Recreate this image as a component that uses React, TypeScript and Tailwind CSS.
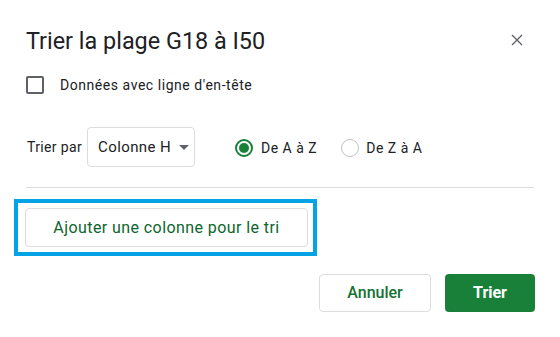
import React from 'react';

export default function App() {
  return (
    <div className="w-[560px] h-[337px] bg-white text-[#202124] font-['Roboto',_'Liberation_Sans',_sans-serif] overflow-hidden">
      {/* Header */}
      <div className="flex items-start justify-between pl-[26px] pr-[36px] pt-[25px]">
        <h1 className="text-[23.4px] leading-8 font-normal text-[#202124]">Trier la plage G18 à I50</h1>
        <button className="mt-[8px] w-[14px] h-[14px] flex items-center justify-center text-[#5f6368]">
          <svg width="12" height="12" viewBox="0 0 12 12" fill="none" stroke="currentColor" strokeWidth="1.4">
            <path d="M1 1L11 11M11 1L1 11" />
          </svg>
        </button>
      </div>

      {/* Header row checkbox */}
      <label className="flex items-center gap-[16px] pl-[26px] mt-[18px]">
        <span className="w-[18px] h-[18px] border-2 border-[#5f6368] rounded-[2px]" />
        <span className="text-[14px] leading-5 tracking-[0.55px]">Données avec ligne d'en-tête</span>
      </label>

      {/* Sort by row */}
      <div className="flex items-center pl-[27px] mt-[32px] h-[40px] whitespace-nowrap">
        <span className="text-[14px] mr-[5px] tracking-[0.35px]">Trier par</span>
        <div className="shrink-0 h-[40px] w-[108px] border border-[#dadce0] rounded-[4px] flex items-center pl-[10px] pr-[6px]">
          <span className="text-[15px] tracking-[0.4px]">Colonne H</span>
          <svg className="ml-[8px] shrink-0" width="10" height="5" viewBox="0 0 10 5">
            <path d="M0 0L5 5L10 0Z" fill="#5f6368" />
          </svg>
        </div>
        <div className="flex items-center ml-[40px] mt-[2px]">
          <span className="w-[18px] h-[18px] rounded-full border-2 border-[#188038] flex items-center justify-center">
            <span className="w-[10px] h-[10px] rounded-full bg-[#188038]" />
          </span>
          <span className="text-[14px] ml-[8px] tracking-[0.5px]">De A à Z</span>
        </div>
        <div className="flex items-center ml-[24px] mt-[2px]">
          <span className="w-[18px] h-[18px] rounded-full border border-[#bdc1c6]" />
          <span className="text-[14px] ml-[7px] tracking-[0.5px]">De Z à A</span>
        </div>
      </div>

      {/* Divider */}
      <div className="mx-[26px] mt-[20px] h-px bg-[#dadce0]" />

      {/* Add column (highlighted) */}
      <div className="ml-[14px] mt-[11px] w-[303px] border-[4px] border-[#04a3e6] pl-[7px] pr-[5px] py-[5px]">
        <button className="w-full h-[39px] border border-[#dadce0] rounded-[4px] text-[#0d652d] text-[16px] font-normal tracking-[0.42px]">
          Ajouter une colonne pour le tri
        </button>
      </div>

      {/* Actions */}
      <div className="flex justify-end gap-[14px] pr-[25px] mt-[18px]">
        <button className="w-[112px] h-[38px] border border-[#dadce0] rounded-[4px] text-[#137333] text-[16px] font-medium">
          Annuler
        </button>
        <button className="w-[90px] h-[38px] bg-[#188038] rounded-[4px] text-white text-[16px] font-bold">
          Trier
        </button>
      </div>
    </div>
  );
}
